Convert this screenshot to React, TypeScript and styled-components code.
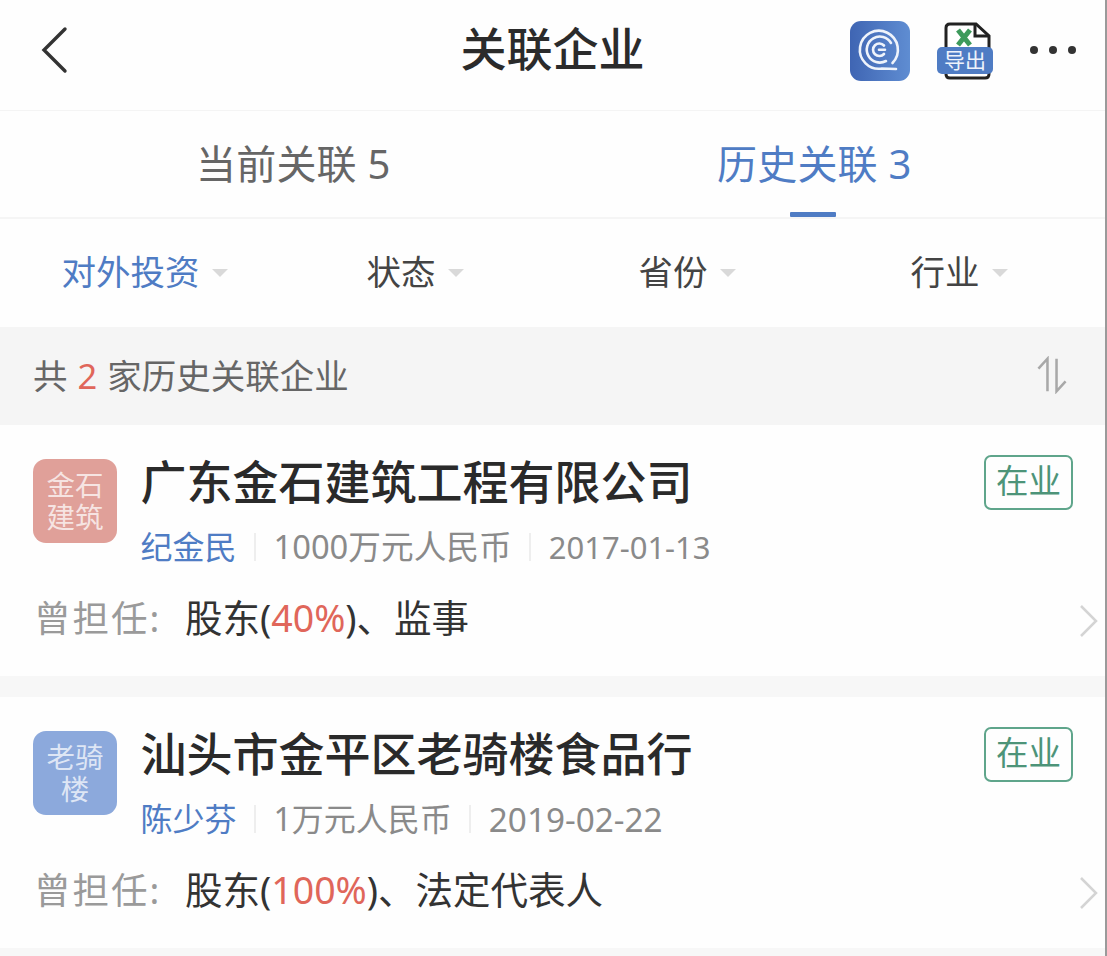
import React from "react";
import styled, { createGlobalStyle } from "styled-components";

const Global = createGlobalStyle`
  html, body { margin: 0; padding: 0; background: #fff; }
  body { font-family: "Liberation Sans", "Noto Sans CJK SC", sans-serif; }
`;
const FONT = `"Noto Sans", "Noto Sans CJK SC", sans-serif`;

const Page = styled.div`
  width: 1105px; height: 956px; overflow: hidden; background: #f7f7f7;
  border-right: 2px solid #9a9a9a; font-family: ${FONT};
`;
const Header = styled.header`
  height: 110px; display: grid; grid-template-columns: 1fr auto 1fr; align-items: center;
  border-bottom: 1px solid #f4f4f4; padding: 0 0 0 40px; background: #fefefe;
`;
const HeaderTitle = styled.h1`
  margin: 0 40px 14px 0; font-size: 46px; font-weight: 500; color: #2b2b2b; line-height: 1;
`;
const HeaderActions = styled.div`
  display: flex; align-items: center; justify-content: flex-end; padding: 0 29px 9px 0;
`;
const BackIcon = styled.svg`width: 28px; height: 48px; display: block; margin-bottom: 10px;`;
const BrandIcon = styled.svg`width: 60px; height: 60px; display: block; margin-right: 29px;`;
const Exporter = styled.div`
  position: relative; width: 56px; height: 58px; margin-right: 35px;
`;
const ExportSheet = styled.svg`width: 50px; height: 58px; display: block; margin-left: 3px;`;
const ExportBadge = styled.span`
  position: absolute; left: -2px; top: 25px; width: 56px; height: 27px; background: #4f7cc4; color: #eef3fb;
  font-size: 21px; line-height: 26px; text-align: center; border-radius: 5px;
`;
const Dots = styled.div`display: flex; gap: 11px; margin-top: -1px;`;
const Dot = styled.i`width: 8px; height: 8px; border-radius: 50%; background: #333; display: block;`;

const Tabs = styled.nav`
  height: 106px; display: grid; grid-template-columns: 553px 1fr; border-bottom: 2px solid #f5f5f5; background: #fefefe;
`;
const Tab = styled.div<{ $active?: boolean; $inset: number }>`
  position: relative; display: flex; align-items: center; padding: 0 0 5px ${p => p.$inset}px;
  font-size: 40px; font-weight: 400; letter-spacing: 0.2px;
  color: ${p => (p.$active ? "#4f7cc4" : "#666")};
`;
const TabBar = styled.i`
  position: absolute; left: 237px; bottom: 0; width: 46px; height: 5px; background: #4f7cc4; border-radius: 1px;
`;

const Filters = styled.div`
  height: 108px; display: grid; grid-template-columns: 291px 272px 272px 1fr; align-items: center; background: #fefefe;
`;
const Filter = styled.div<{ $active?: boolean; $shift: number }>`
  display: flex; align-items: center; justify-content: center; gap: 12px; font-size: 34.5px; padding-bottom: 6px;
  color: ${p => (p.$active ? "#4f7cc4" : "#444")}; transform: translateX(${p => p.$shift}px);
`;
const Caret = styled.i`
  width: 0; height: 0; border-left: 8.5px solid transparent; border-right: 8.5px solid transparent;
  border-top: 8px solid #d9d9d9; display: block; margin-top: 5px;
`;

const CountBar = styled.div`
  height: 98px; background: #f5f5f5; display: flex; align-items: center; justify-content: space-between;
  padding: 0 37px 0 33px; font-size: 34.5px; color: #666;
`;
const CountText = styled.span`margin-top: -4px;`;
const CountNum = styled.b`color: #e0665a; font-weight: 400; margin: 0 10px;`;
const SortIcon = styled.svg`width: 32px; height: 38px; display: block; margin-top: -2px;`;

const Card = styled.article`
  height: 251px; box-sizing: border-box; padding: 30px 32px 0 33px; background: #fefefe; position: relative;
  margin-bottom: 21px; display: grid; grid-template-columns: 84px 1fr auto; column-gap: 23.5px; align-content: start;
`;
const Avatar = styled.div<{ $bg: string }>`
  width: 84px; height: 84px; margin-top: 4px; border-radius: 13px; background: ${p => p.$bg}; color: rgba(255, 255, 255, 0.72);
  font-size: 28.5px; line-height: 32px; display: flex; align-items: center; justify-content: center; text-align: center;
`;
const Main = styled.div`min-width: 0;`;
const Title = styled.h2`
  margin: -2px 0 0; font-size: 46px; line-height: 56px; font-weight: 500; color: #2a2a2a; white-space: nowrap;
`;
const Meta = styled.div`
  display: flex; align-items: center; margin-top: 16px; line-height: 44px; color: #8a8a8a; white-space: nowrap;
`;
const Person = styled.span`font-size: 32px; color: #4f7cc4;`;
const Sep = styled.i`width: 2px; height: 28px; background: #eeeeee; margin: 0 17.5px; display: block;`;
const Capital = styled.span<{ $size: number }>`font-size: ${p => p.$size}px;`;
const MetaDate = styled.span<{ $size: number }>`font-size: ${p => p.$size}px;`;
const Tag = styled.div`
  width: 89px; height: 55px; box-sizing: border-box; border: 2px solid #5fa58b; border-radius: 7px; color: #4d9479;
  font-size: 32.5px; line-height: 48px; text-align: center;
`;
const Role = styled.div`
  grid-column: 1 / -1; display: flex; align-items: center; margin-top: 24px; font-size: 37.5px; line-height: 50px; color: #333; white-space: nowrap;
`;
const RoleLabel = styled.span`color: #9a9a9a; width: 152px; margin-left: 1px; margin-right: -1px; font-size: 36.5px; letter-spacing: 2px;`;
const Pct = styled.span`color: #e0665a;`;
const Chevron = styled.svg`position: absolute; right: 5px; top: 178px; width: 22px; height: 36px;`;

type ItemProps = {
  logo: React.ReactNode; bg: string; name: string; person: string; capital: string; capitalSize: number;
  date: string; dateSize: number; pct: string; roles: string;
};

const Item = ({ logo, bg, name, person, capital, capitalSize, date, dateSize, pct, roles }: ItemProps) => (
  <Card>
    <Avatar $bg={bg}>{logo}</Avatar>
    <Main>
      <Title>{name}</Title>
      <Meta>
        <Person>{person}</Person><Sep /><Capital $size={capitalSize}>{capital}</Capital><Sep /><MetaDate $size={dateSize}>{date}</MetaDate>
      </Meta>
    </Main>
    <Tag>在业</Tag>
    <Role>
      <RoleLabel>曾担任:</RoleLabel>股东(<Pct>{pct}</Pct>)、{roles}
    </Role>
    <Chevron viewBox="0 0 22 36" fill="none"><path d="M3 3 L18 18 L3 33" stroke="#d4d4d4" strokeWidth="2.5" /></Chevron>
  </Card>
);

export default function App() {
  return (
    <Page>
      <Global />
      <Header>
        <BackIcon viewBox="0 0 28 48" fill="none"><path d="M25 3 L4 24 L25 45" stroke="#333" strokeWidth="3.4" strokeLinecap="round" /></BackIcon>
        <HeaderTitle>关联企业</HeaderTitle>
        <HeaderActions>
          <BrandIcon viewBox="0 0 60 60" fill="none">
            <defs>
              <linearGradient id="bg" x1="0" y1="0" x2="1" y2="0">
                <stop offset="0" stopColor="#3f65b3" />
                <stop offset="1" stopColor="#5f8dd2" />
              </linearGradient>
            </defs>
            <rect width="60" height="60" rx="11" fill="url(#bg)" />
            <g stroke="#eef3fb" strokeWidth="2.6" strokeLinecap="round">
              <path d="M42.5 42 A19 19 0 1 0 32 47.5 L46 48" />
              <path d="M36 40 A13 13 0 1 1 41 22" />
              <path d="M34 24.5 A6.3 6.3 0 1 0 34 33 M29 28.7 H35" />
            </g>
          </BrandIcon>
          <Exporter>
            <ExportSheet viewBox="0 0 50 58" fill="none">
              <path d="M8 2 H34 L47 14 V52 Q47 56 43 56 H8 Q4 56 4 52 V6 Q4 2 8 2 Z" fill="#fff" stroke="#222" strokeWidth="3" />
              <path d="M33 3 V14 H46" stroke="#222" strokeWidth="3" />
              <path d="M16 8 L28 23 M28 8 L16 23" stroke="#3d9a5b" strokeWidth="5" />
            </ExportSheet>
            <ExportBadge>导出</ExportBadge>
          </Exporter>
          <Dots><Dot /><Dot /><Dot /></Dots>
        </HeaderActions>
      </Header>
      <Tabs>
        <Tab $inset={196}>当前关联 5</Tab>
        <Tab $active $inset={164}>历史关联 3<TabBar /></Tab>
      </Tabs>
      <Filters>
        <Filter $active $shift={-1}>对外投资<Caret /></Filter>
        <Filter $shift={-12}>状态<Caret /></Filter>
        <Filter $shift={-12}>省份<Caret /></Filter>
        <Filter $shift={-11}>行业<Caret /></Filter>
      </Filters>
      <CountBar>
        <CountText>共<CountNum>2</CountNum>家历史关联企业</CountText>
        <SortIcon viewBox="0 0 34 42" fill="none">
          <path d="M2 14 L12 3 V39" stroke="#a8a8a8" strokeWidth="2.8" />
          <path d="M22 3 V39 L32 28" stroke="#a8a8a8" strokeWidth="2.8" />
        </SortIcon>
      </CountBar>
      <Item logo={<>金石<br />建筑</>} bg="#e0a099" name="广东金石建筑工程有限公司" person="纪金民" capital="1000万元人民币" capitalSize={32.7} date="2017-01-13" dateSize={31} pct="40%" roles="监事" />
      <Item logo={<>老骑<br />楼</>} bg="#8ca9dc" name="汕头市金平区老骑楼食品行" person="陈少芬" capital="1万元人民币" capitalSize={32} date="2019-02-22" dateSize={33.3} pct="100%" roles="法定代表人" />
    </Page>
  );
}
